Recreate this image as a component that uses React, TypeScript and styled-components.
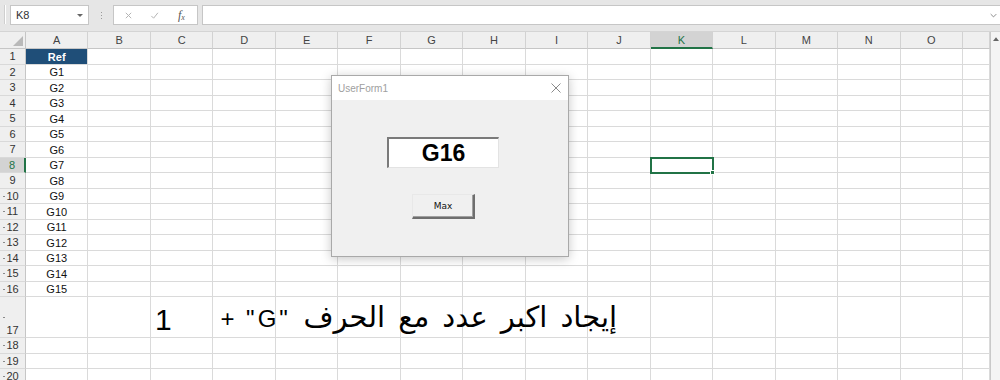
import React from "react";
import styled, { createGlobalStyle, css } from "styled-components";

const GlobalStyle = createGlobalStyle`
  html, body {
    margin: 0;
    padding: 0;
    background: #ffffff;
  }
  * {
    box-sizing: border-box;
  }
`;

const COLS = ["A", "B", "C", "D", "E", "F", "G", "H", "I", "J", "K", "L", "M", "N", "O", ""];
const ROW_HEIGHTS = [
  ...Array.from({ length: 16 }, () => 15.5),
  41,
  15.5,
  15.5,
  15.5,
];

const SEL_COL = 10; // K
const SEL_ROW = 8;

export default function App() {
  return (
    <Page>
      <GlobalStyle />
      <FormulaBar>
        <RibbonEdge />
        <NameBox>
          <span>K8</span>
          <DropArrow />
        </NameBox>
        <GripDots>
          <i />
          <i />
          <i />
        </GripDots>
        <FxBox>
          <FxIcon viewBox="0 0 10 10">
            <path d="M2 2 L8 8 M8 2 L2 8" />
          </FxIcon>
          <FxIcon viewBox="0 0 10 10">
            <path d="M1.5 5.5 L4 8 L8.8 2" />
          </FxIcon>
          <FxLabel>
            f<sub>x</sub>
          </FxLabel>
        </FxBox>
        <FormulaInput>
          <Chevron viewBox="0 0 10 6">
            <path d="M1 1 L5 5 L9 1" />
          </Chevron>
        </FormulaInput>
      </FormulaBar>

      <SheetArea>
        <Grid>
          <Corner>
            <CornerTriangle viewBox="0 0 10 10">
              <path d="M10 0 L10 10 L0 10 Z" />
            </CornerTriangle>
          </Corner>
          {COLS.map((c, i) => (
            <ColHeader key={c + i} $active={i === SEL_COL}>
              {c}
            </ColHeader>
          ))}

          {ROW_HEIGHTS.map((h, r) => {
            const row = r + 1;
            return (
              <React.Fragment key={row}>
                <RowHeader
                  style={{ height: h }}
                  $active={row === SEL_ROW}
                  $dot={row >= 10}
                  $tall={row === 17}
                >
                  {row}
                </RowHeader>
                {COLS.map((_, ci) => {
                  const key = `${row}-${ci}`;
                  if (ci === 0 && row === 1) {
                    return (
                      <HeadCell key={key} style={{ height: h }}>
                        Ref
                      </HeadCell>
                    );
                  }
                  if (ci === 0 && row >= 2 && row <= 16) {
                    return (
                      <Cell key={key} style={{ height: h }} $center>
                        G{row - 1}
                      </Cell>
                    );
                  }
                  if (ci === 2 && row === 17) {
                    return (
                      <Cell key={key} style={{ height: h }}>
                        <BigNumber>1</BigNumber>
                      </Cell>
                    );
                  }
                  if (ci === 3 && row === 17) {
                    return (
                      <Cell key={key} style={{ height: h }}>
                        <ArabicText dir="rtl">
                          <ArabicWords>إيجاد اكبر عدد مع الحرف</ArabicWords>{" "}
                          <Quoted>"G"</Quoted> +
                        </ArabicText>
                      </Cell>
                    );
                  }
                  return (
                    <Cell
                      key={key}
                      style={{ height: h }}
                      $selected={ci === SEL_COL && row === SEL_ROW}
                    >
                      {ci === SEL_COL && row === SEL_ROW && <FillHandle />}
                    </Cell>
                  );
                })}
              </React.Fragment>
            );
          })}
        </Grid>
        <ScrollBar>
          <ScrollArrow viewBox="0 0 8 5">
            <path d="M0 5 L4 0 L8 5 Z" />
          </ScrollArrow>
        </ScrollBar>

        <Dialog>
          <TitleBar>
            <TitleText>UserForm1</TitleText>
            <CloseIcon viewBox="0 0 10 10">
              <path d="M0.5 0.5 L9.5 9.5 M9.5 0.5 L0.5 9.5" />
            </CloseIcon>
          </TitleBar>
          <DialogBody>
            <ResultBox>G16</ResultBox>
            <MaxButton>Max</MaxButton>
          </DialogBody>
        </Dialog>
      </SheetArea>
    </Page>
  );
}

const Page = styled.div`
  width: 1000px;
  height: 380px;
  overflow: hidden;
  position: relative;
  font-family: "Liberation Sans", Arial, sans-serif;
  background: #ffffff;
`;

const FormulaBar = styled.div`
  height: 32px;
  background: #e6e6e6;
  display: flex;
  align-items: flex-start;
  padding-top: 5px;
  border-bottom: 1px solid #d4d4d4;
`;

const RibbonEdge = styled.div`
  width: 2px;
  height: 19px;
  margin-left: 4px;
  background: #ffffff;
  border-left: 1px solid #cfcfcf;
`;

const NameBox = styled.div`
  margin-left: 4px;
  width: 79px;
  height: 20px;
  background: #ffffff;
  border: 1px solid #c6c6c6;
  display: flex;
  align-items: center;
  justify-content: space-between;
  padding: 0 5px 0 5px;
  font-size: 11px;
  color: #333;
`;

const DropArrow = styled.div`
  width: 0;
  height: 0;
  border-left: 3px solid transparent;
  border-right: 3px solid transparent;
  border-top: 3px solid #666;
`;

const GripDots = styled.div`
  width: 24px;
  height: 20px;
  display: flex;
  flex-direction: column;
  align-items: center;
  justify-content: center;
  gap: 2px;

  i {
    width: 1px;
    height: 1px;
    background: #9a9a9a;
  }
`;

const FxBox = styled.div`
  width: 85px;
  height: 20px;
  background: #ffffff;
  border: 1px solid #c6c6c6;
  display: flex;
  align-items: center;
  padding-left: 10px;
  gap: 17px;
`;

const FxIcon = styled.svg`
  width: 9px;
  height: 9px;
  fill: none;
  stroke: #b4b4b4;
  stroke-width: 1.1;
`;

const FxLabel = styled.span`
  font-family: "Liberation Serif", "Times New Roman", serif;
  font-style: italic;
  font-size: 12px;
  color: #555;
  margin-left: 2px;

  sub {
    font-size: 8px;
    vertical-align: -1px;
  }
`;

const FormulaInput = styled.div`
  margin-left: 4px;
  flex: 1;
  height: 20px;
  background: #ffffff;
  border: 1px solid #c6c6c6;
  border-right: none;
  display: flex;
  align-items: center;
  justify-content: flex-end;
  padding-right: 3px;
`;

const Chevron = styled.svg`
  width: 7px;
  height: 5px;
  fill: none;
  stroke: #777;
  stroke-width: 1.2;
`;

const SheetArea = styled.div`
  position: relative;
  display: flex;
  height: 348px;
`;

const Grid = styled.div`
  width: 990px;
  display: grid;
  grid-template-columns: 26px repeat(15, 62.47px) 1fr;
  grid-auto-rows: auto;
  align-content: start;
  overflow: hidden;
`;

const headerBase = css`
  background: #efefef;
  color: #444;
  font-size: 11px;
  display: flex;
  align-items: center;
  justify-content: center;
`;

const Corner = styled.div`
  ${headerBase};
  height: 17px;
  border-right: 1px solid #c6c6c6;
  border-bottom: 1px solid #c6c6c6;
  justify-content: flex-end;
  align-items: flex-end;
  padding: 0 2px 2px 0;
`;

const CornerTriangle = styled.svg`
  width: 10px;
  height: 10px;
  fill: #b9b9b9;
`;

const ColHeader = styled.div<{ $active?: boolean }>`
  ${headerBase};
  height: 17px;
  border-right: 1px solid #d2d2d2;
  border-bottom: 1px solid #c6c6c6;
  ${(p) =>
    p.$active &&
    css`
      background: #d3d3d3;
      color: #217346;
      border-bottom: 2px solid #217346;
    `}
`;

const RowHeader = styled.div<{ $active?: boolean; $dot?: boolean; $tall?: boolean }>`
  ${headerBase};
  position: relative;
  color: #333;
  border-right: 1px solid #c6c6c6;
  border-bottom: 1px solid #d9d9d9;
  align-items: ${(p) => (p.$tall ? "flex-end" : "center")};
  padding-bottom: ${(p) => (p.$tall ? "1px" : "0")};
  ${(p) =>
    p.$active &&
    css`
      background: #d3d3d3;
      color: #217346;
      border-right: 2px solid #217346;
    `}
  ${(p) =>
    p.$dot &&
    css`
      &::before {
        content: "";
        position: absolute;
        left: 3px;
        top: 50%;
        width: 2px;
        height: 1px;
        background: #8a8a8a;
      }
    `}
`;

const Cell = styled.div<{ $center?: boolean; $selected?: boolean }>`
  position: relative;
  border-right: 1px solid #dadada;
  border-bottom: 1px solid #dadada;
  font-size: 11px;
  color: #111;
  display: flex;
  align-items: flex-end;
  justify-content: ${(p) => (p.$center ? "center" : "flex-start")};
  padding-bottom: 1px;
  overflow: visible;
  white-space: nowrap;
  ${(p) =>
    p.$selected &&
    css`
      outline: 2px solid #217346;
      outline-offset: -1px;
      z-index: 1;
    `}
`;

const HeadCell = styled(Cell)`
  background: #1f4e78;
  color: #ffffff;
  font-weight: bold;
  justify-content: center;
`;

const FillHandle = styled.div`
  position: absolute;
  right: -3px;
  bottom: -3px;
  width: 5px;
  height: 5px;
  background: #217346;
  border: 1px solid #ffffff;
`;

const BigNumber = styled.span`
  font-size: 30px;
  line-height: 32px;
  margin-left: 4px;
  color: #000;
`;

const ArabicText = styled.span`
  font-family: "Liberation Sans", "DejaVu Sans", sans-serif;
  font-size: 24px;
  line-height: 34px;
  margin-left: 7px;
  color: #000;
  word-spacing: 5px;
  position: relative;
  z-index: 2;
`;

const ArabicWords = styled.span`
  font-size: 29px;
`;

const Quoted = styled.span`
  letter-spacing: 3px;
  margin-right: 4px;
`;

const ScrollBar = styled.div`
  flex: 1;
  background: #f4f4f4;
  border-left: 1px solid #c9c9c9;
  display: flex;
  justify-content: center;
  padding-top: 5px;
`;

const ScrollArrow = styled.svg`
  width: 6px;
  height: 4px;
  fill: #666;
`;

const Dialog = styled.div`
  position: absolute;
  left: 331px;
  top: 43px;
  width: 238px;
  height: 182px;
  background: #f0f0f0;
  border: 1px solid #a9a9a9;
  box-shadow: 0 2px 10px rgba(0, 0, 0, 0.22);
  display: flex;
  flex-direction: column;
  z-index: 5;
`;

const TitleBar = styled.div`
  height: 24px;
  background: #ffffff;
  display: flex;
  align-items: center;
  justify-content: space-between;
  padding: 0 7px 0 6px;
`;

const TitleText = styled.span`
  font-family: "Liberation Sans", Arial, sans-serif;
  font-size: 10px;
  color: #a0a0a0;
`;

const CloseIcon = styled.svg`
  width: 10px;
  height: 10px;
  fill: none;
  stroke: #8a8a8a;
  stroke-width: 1;
`;

const DialogBody = styled.div`
  flex: 1;
  display: flex;
  flex-direction: column;
  align-items: center;
  padding-top: 37px;
`;

const ResultBox = styled.div`
  width: 112px;
  height: 31px;
  margin-left: -14px;
  background: #ffffff;
  border-top: 2px solid #7a7a7a;
  border-left: 2px solid #7a7a7a;
  border-right: 1px solid #e3e3e3;
  border-bottom: 1px solid #e3e3e3;
  display: flex;
  align-items: center;
  justify-content: center;
  font-family: "Liberation Sans", Arial, sans-serif;
  font-weight: bold;
  font-size: 23px;
  color: #000;
`;

const MaxButton = styled.div`
  margin-top: 26px;
  width: 63px;
  height: 25px;
  margin-left: -13px;
  background: #f0f0f0;
  border-top: 1px solid #e8e8e8;
  border-left: 1px solid #e8e8e8;
  border-right: 2px solid #6e6e6e;
  border-bottom: 2px solid #6e6e6e;
  box-shadow: inset -1px -1px 0 #a0a0a0;
  display: flex;
  align-items: center;
  justify-content: center;
  font-family: "DejaVu Sans", Tahoma, sans-serif;
  font-size: 9px;
  color: #111;
`;
